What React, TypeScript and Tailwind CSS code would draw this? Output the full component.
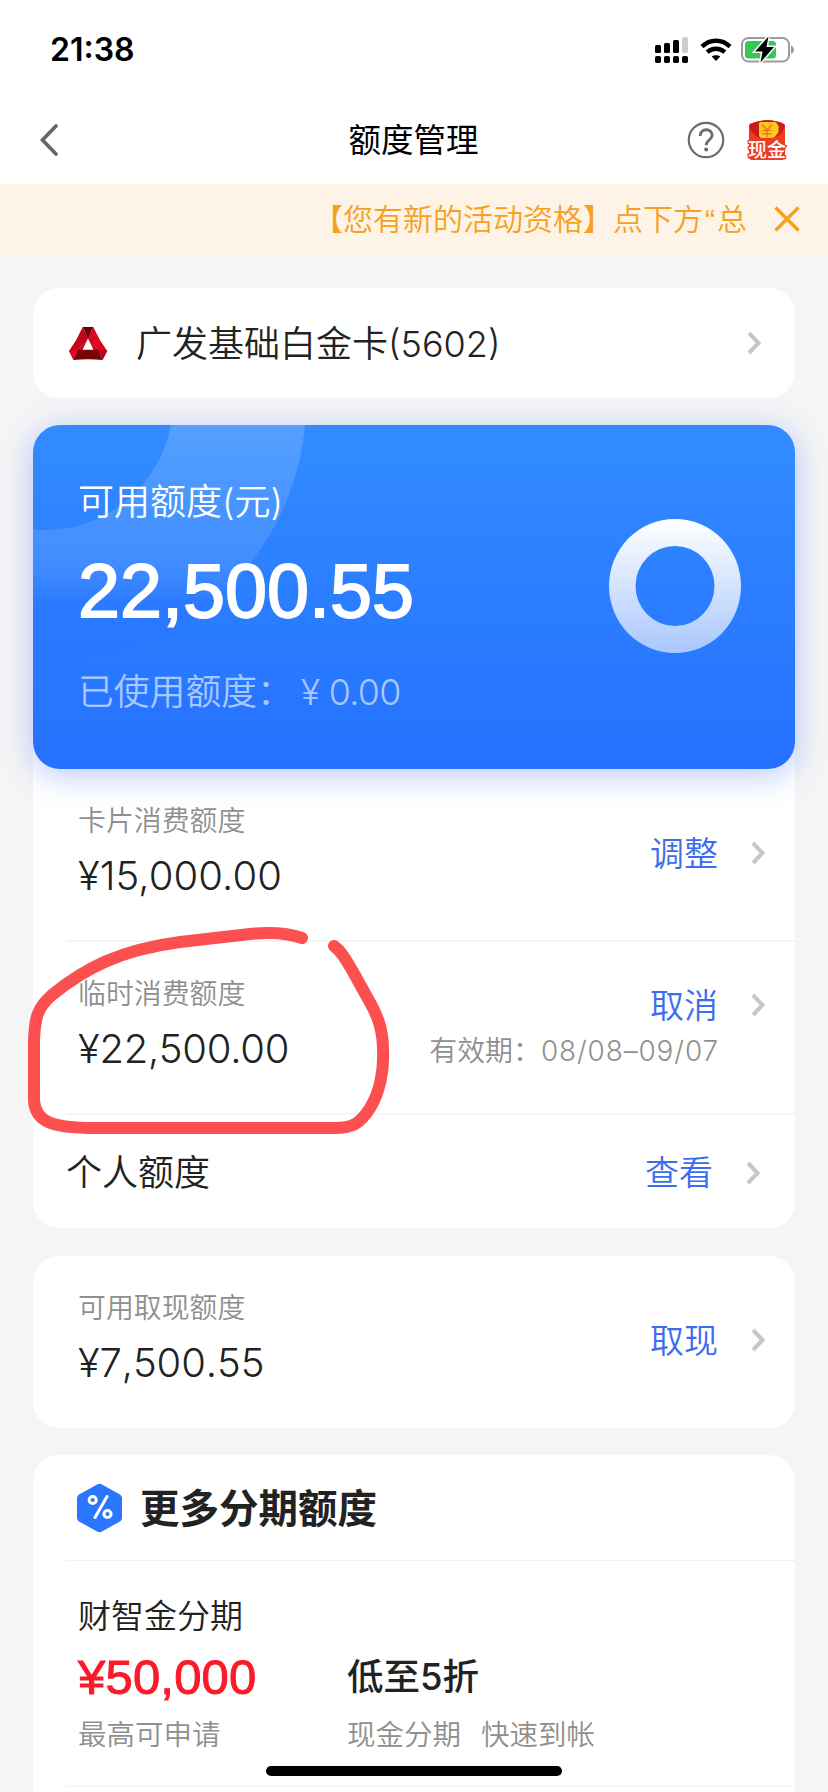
import type { ReactNode } from 'react'

function Chevron() {
  return (
    <svg className="w-[14px] h-6 shrink-0" viewBox="0 0 14 24" fill="none" stroke="#c6c7cb" strokeWidth="4">
      <path d="M2 2 L11.5 12 L2 22" />
    </svg>
  )
}

function StatusBar() {
  return (
    <div className="flex justify-between items-center h-[100px] pl-[50px] pr-[33px] text-black">
      <span className="text-[32px] font-semibold leading-none">21:38</span>
      <div className="flex items-center">
        <svg className="w-[34px] h-7" viewBox="0 0 34 28">
          <rect x="0" y="9" width="6" height="8" rx="1.5" />
          <rect x="9" y="7" width="6" height="10" rx="1.5" />
          <rect x="18" y="4" width="6" height="13" rx="1.5" />
          <rect x="27" y="1" width="6" height="16" rx="1.5" fill="#cccccc" />
          <rect x="0" y="20" width="6" height="7" rx="1.8" />
          <rect x="9" y="20" width="6" height="7" rx="1.8" />
          <rect x="18" y="20" width="6" height="7" rx="1.8" />
          <rect x="27" y="20" width="6" height="7" rx="1.8" />
        </svg>
        <svg className="w-8 h-6 ml-[11px]" viewBox="0 0 32 24" fill="none" stroke="#000" strokeWidth="4.4">
          <path d="M2 8.6 C10 0.8 22 0.8 30 8.6" />
          <path d="M7.2 14.2 C12.2 9.6 19.8 9.6 24.8 14.2" />
          <path d="M11.7 18.6 C14.2 16.7 17.8 16.7 20.3 18.6 L16 23 Z" fill="#000" stroke="none" />
        </svg>
        <svg className="w-[54px] h-7 ml-[9px]" viewBox="0 0 54 28">
          <rect x="1" y="2" width="47" height="23.5" rx="6.5" fill="none" stroke="#9b9b9f" strokeWidth="2" />
          <rect x="4" y="5" width="31" height="17.5" rx="3.5" fill="#34c759" />
          <path d="M50 9.5 C54 11 54 16.5 50 18 Z" fill="#9b9b9f" />
          <path d="M27.5 0.5 L14 15.5 H21.5 L19.5 26.5 L33 11 H25.5 Z" stroke="#fff" strokeWidth="3" paintOrder="stroke" />
        </svg>
      </div>
    </div>
  )
}

function NavBar() {
  return (
    <div className="flex items-center h-[84px] pb-1 pl-10 pr-[41px]">
      <svg className="w-[19px] h-8" viewBox="0 0 19 32" fill="none" stroke="#666" strokeWidth="3.6" strokeLinecap="round">
        <path d="M16 2 L2.5 16 L16 30" />
      </svg>
      <h1 className="flex-1 pt-0.5 pl-[81px] text-center text-[32.5px] font-normal text-black">额度管理</h1>
      <svg className="w-[38px] h-[38px]" viewBox="0 0 38 38" fill="none" stroke="#6b6b6b" strokeWidth="2.2">
        <circle cx="19" cy="19" r="17.2" />
        <path d="M13.2 15 C13.2 6.8 25.2 6.8 25.2 14.3 C25.2 18.8 19.2 18.8 19.2 24.3" strokeWidth="2.8" />
        <circle cx="19.2" cy="28.5" r="2" fill="#6b6b6b" stroke="none" />
      </svg>
      <svg className="w-10 h-10 ml-[22px]" viewBox="0 0 40 40">
        <path d="M2 5 C10 -1.2 30 -1.2 38 5 V37 Q38 40 35 40 H5 Q2 40 2 37 Z" fill="#ee3c24" />
        <path d="M2 5 C10 -1.2 30 -1.2 38 5 C36 15 29 18.5 20 18.5 C11 18.5 4 15 2 5 Z" fill="#cf1a1c" />
        <path d="M12 3.5 Q12 2 13.5 2 H28 Q30 2 30 4 Q32.5 6 31.5 9 Q32 13 30 14 Q28 18 24 18 H14 Q12 17 12 15 Z" fill="#fdc91c" />
        <path d="M15 4.5 L20 10 L25 4.5 M20 10 V17 M15.5 10.5 H24.5 M15.5 13.8 H24.5" stroke="#ee7d1b" strokeWidth="1.6" fill="none" />
        <text x="20" y="36.5" textAnchor="middle" fontSize="19" fontWeight="500" fill="#fff" stroke="#ee3c24" strokeWidth="2.6" paintOrder="stroke">现金</text>
      </svg>
    </div>
  )
}

function Notice() {
  return (
    <div className="flex items-center h-[70px] bg-[#fdf3e6] text-[#f7a01d]">
      <div className="ml-[313px] w-[433px] overflow-hidden whitespace-nowrap text-[30px] leading-[44px]">
        【您有新的活动资格】点下方<span className="mx-[2px] font-['Liberation_Sans']">“</span>总
      </div>
      <svg className="w-[26px] h-[26px] ml-7" viewBox="0 0 26 26" stroke="#f7a01d" strokeWidth="3.4">
        <path d="M1.5 1.5 L24.5 24.5 M24.5 1.5 L1.5 24.5" />
      </svg>
    </div>
  )
}

function BankLogo() {
  return (
    <svg className="w-10 h-[35px]" viewBox="0 0 40 35">
      <path d="M14.7 1 L20 12 L10 24 L5.5 34 L1 25 Q9 14 14.7 1 Z" fill="#c4061d" />
      <path d="M25.3 1 Q31 14 39.3 25 L34.5 34 L30 24 L20 12 Z" fill="#dd0722" />
      <path d="M20 11 L30 24 H10 Z" fill="#cf0720" />
      <path d="M14.7 1 H25.3 L20 12.5 Z" fill="#6d0306" />
      <path d="M10 23.6 H30 L34.5 34 Q20 32.5 5.5 34 Z" fill="#7a0306" />
      <path d="M1 24.5 L10 23.6 L5.5 34 Z" fill="#e00824" />
      <path d="M30 23.6 L39.3 24.5 L34.5 34 Z" fill="#b8051b" />
      <path d="M20 12.5 L25.5 23.8 H14.5 Z" fill="#fff" />
    </svg>
  )
}

function BalanceCard() {
  return (
    <div className="relative h-[344px] rounded-[27px] bg-linear-to-b from-[#328cff] to-[#2670ff] shadow-[0_6px_32px_rgba(50,100,255,0.35)]">
      <svg className="absolute inset-0 w-full h-full rounded-[27px]" viewBox="0 0 762 344">
        <defs>
          <linearGradient id="arc" gradientUnits="userSpaceOnUse" x1="0" y1="0" x2="0" y2="238">
            <stop offset="0" stopColor="#fff" stopOpacity="0.17" />
            <stop offset="0.45" stopColor="#fff" stopOpacity="0.11" />
            <stop offset="0.75" stopColor="#2a6cff" stopOpacity="0.25" />
            <stop offset="1" stopColor="#2a6cff" stopOpacity="0.2" />
          </linearGradient>
          <linearGradient id="donut" x1="0" y1="0" x2="0" y2="1">
            <stop offset="0" stopColor="#fff" />
            <stop offset="1" stopColor="#a9c8fd" />
          </linearGradient>
        </defs>
        <circle cx="12" cy="-23" r="194.5" fill="none" stroke="url(#arc)" strokeWidth="133" />
        <path
          d="M576 161 a66 67 0 1 0 132 0 a66 67 0 1 0 -132 0 Z M602.5 161 a39.5 40 0 1 1 79 0 a39.5 40 0 1 1 -79 0 Z"
          fill="url(#donut)"
          fillRule="evenodd"
        />
      </svg>
      <div className="relative pt-[49px] pl-[45px] text-white">
        <div className="text-[36px] leading-[56px]">可用额度(元)</div>
        <div className="mt-[18px] h-[86px] font-['Liberation_Sans'] text-[75.5px] leading-[86px] [-webkit-text-stroke:1.8px_#fff]">22,500.55</div>
        <div className="mt-[30px] text-[35.8px] leading-[56px] text-[#a9c8ff]">
          已使用额度：<span className="ml-[8px] tracking-[-0.7px]">¥ 0.00</span>
        </div>
      </div>
    </div>
  )
}

type LimitRowProps = {
  label: string
  amount: string
  action: string
  note?: string
  amountClass?: string
}

function LimitRow({ label, amount, action, note, amountClass = '' }: LimitRowProps) {
  return (
    <div className="flex justify-between h-[171px] pl-[45px] pr-[30px]">
      <div className="pt-8">
        <div className="text-[27.9px] leading-10 text-[#8f8f8f]">{label}</div>
        <div className={`text-[40px] leading-[70px] text-[#222] ${amountClass}`}>{amount}</div>
      </div>
      <div className={note ? 'pt-[39px]' : 'pt-[60px]'}>
        <div className="flex justify-end items-center gap-[33px] h-12">
          <span className="text-[34px] text-[#3c6df0]">{action}</span>
          <Chevron />
        </div>
        {note && (
          <div className="pr-[46px] text-right text-[27.9px] leading-[44px] text-[#8f8f8f]">
            有效期：<span className="tracking-[0.9px]">{note}</span>
          </div>
        )}
      </div>
    </div>
  )
}

function Panel({ className = '', children }: { className?: string; children: ReactNode }) {
  return <section className={`bg-white ${className}`}>{children}</section>
}

function Divider() {
  return <div className="ml-[33px] h-0.5 bg-[#f4f4f5]" />
}

export default function App() {
  return (
    <div className="relative w-[828px] h-[1792px] overflow-hidden bg-[#f5f5f5] font-['Inter','Noto_Sans_CJK_SC',sans-serif] font-[350]">
      <header className="bg-white">
        <StatusBar />
        <NavBar />
      </header>
      <Notice />

      <main className="px-[33px] pt-[34px]">
        <Panel className="flex items-center h-[110px] rounded-[26px] pl-[35px] pr-[34px]">
          <BankLogo />
          <span className="flex-1 ml-7 pt-0.5 text-[36px] text-[#222]">广发基础白金卡(5602)</span>
          <Chevron />
        </Panel>

        <div className="mt-[27px] rounded-[26px] bg-white">
          <BalanceCard />
          <LimitRow label="卡片消费额度" amount="¥15,000.00" action="调整" amountClass="tracking-[0.1px]" />
          <Divider />
          <LimitRow label="临时消费额度" amount="¥22,500.00" action="取消" note="08/08–09/07" amountClass="tracking-[-0.2px]" />
          <Divider />
          <div className="flex items-center h-[113px] pt-0.5 pl-[33px] pr-[35px]">
            <span className="flex-1 text-[36px] text-[#222]">个人额度</span>
            <span className="mr-[33px] text-[34px] text-[#3c6df0]">查看</span>
            <Chevron />
          </div>
        </div>

        <Panel className="mt-7 h-[172px] rounded-[26px]">
          <LimitRow label="可用取现额度" amount="¥7,500.55" action="取现" amountClass="tracking-[-0.1px] [font-kerning:none]" />
        </Panel>

        <Panel className="mt-[27px] h-[400px] rounded-t-[26px]">
          <div className="flex items-center h-[105px] pl-11">
            <svg className="w-[45px] h-[50px]" viewBox="0 0 45 50">
              <path d="M20 1.5 Q22.5 0 25 1.5 L42 11 Q45 12.5 45 15.5 V34.5 Q45 37.5 42 39 L25 48.5 Q22.5 50 20 48.5 L3 39 Q0 37.5 0 34.5 V15.5 Q0 12.5 3 11 Z" fill="#2b76ff" />
              <g fill="none" stroke="#fff" strokeWidth="3" strokeLinecap="round">
                <circle cx="15.7" cy="17" r="3.6" />
                <circle cx="30.5" cy="31" r="3.6" />
                <path d="M30 13.5 L18 34.5" />
              </g>
            </svg>
            <h2 className="ml-[18px] pt-1 text-[39.5px] font-bold text-[#222]">更多分期额度</h2>
          </div>
          <div className="ml-[33px] h-px bg-[#f0f0f1]" />
          <div className="pt-[30px] pl-[45px] h-[225px]">
            <div className="text-[33px] leading-[50px] text-[#222]">财智金分期</div>
            <div className="flex">
              <div className="w-[269px]">
                <div className="font-['Liberation_Sans'] text-[49px] leading-[72px] tracking-[0.2px] text-[#fa1a2a] [-webkit-text-stroke:1px_#fa1a2a]">¥50,000</div>
                <div className="text-[28.5px] leading-[44px] text-[#8f8f8f]">最高可申请</div>
              </div>
              <div>
                <div className="text-[36.5px] font-medium leading-[72px] text-[#222]">低至5折</div>
                <div className="flex gap-5 text-[28.5px] leading-[44px] text-[#8f8f8f]">
                  <span>现金分期</span>
                  <span>快速到帐</span>
                </div>
              </div>
            </div>
          </div>
          <div className="ml-[33px] h-px bg-[#f0f0f1]" />
        </Panel>
      </main>

      {/* Hand-drawn marker */}
      <svg className="absolute left-0 top-[900px] w-[420px] h-[260px]" viewBox="0 900 420 260" fill="none" stroke="#fc5050" strokeWidth="12" strokeLinecap="round">
        <path d="M302 938 C285 932 268 932 250 934 L180 942 C120 950 85 968 52 995 C37 1008 35 1018 34 1040 L34 1100 C35 1122 52 1128 95 1128 L335 1128 C352 1128 360 1124 370 1108 C380 1092 384 1070 383 1050 C383 1030 378 1018 372 1006 L352 970 C345 958 341 951 334 946" />
      </svg>

      {/* Home indicator */}
      <div className="absolute left-[266px] top-[1766px] w-[296px] h-[10px] rounded-full bg-black" />
    </div>
  )
}
